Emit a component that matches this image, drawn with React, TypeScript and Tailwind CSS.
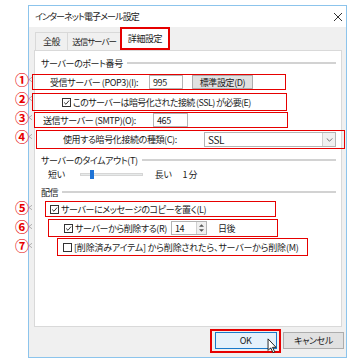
import React from 'react';

const Check: React.FC<{ checked?: boolean }> = ({ checked }) => (
    <span className="w-[9px] h-[9px] border border-[#333333] bg-white flex items-center justify-center shrink-0">
        {checked && (
            <svg viewBox="0 0 9 9" className="w-[9px] h-[9px]">
                <path d="M1.5 4.5 L3.8 6.8 L7.8 2" stroke="#222" strokeWidth="1.2" fill="none" />
            </svg>
        )}
    </span>
);

const Section: React.FC<{ label: string; className?: string }> = ({ label, className }) => (
    <div className={`flex items-center h-[14px] pl-[6px] pr-[5px] ${className ?? ''}`}>
        <span>{label}</span>
        <div className="flex-1 h-[2px] bg-[#d2d2d2] ml-[4px]" />
    </div>
);

const marks = [
    { n: '①', top: 'top-[72px]' },
    { n: '②', top: 'top-[91px]' },
    { n: '③', top: 'top-[110px]' },
    { n: '④', top: 'top-[129px]' },
    { n: '⑤', top: 'top-[200px]' },
    { n: '⑥', top: 'top-[219px]' },
    { n: '⑦', top: 'top-[238px]' },
];

const App: React.FC = () => {
    return (
        <div className="relative w-[351px] h-[359px] bg-white overflow-hidden text-[9px] leading-none tracking-[-0.4px] whitespace-nowrap text-[#1a1a1a] font-['Noto_Sans_CJK_JP',sans-serif] [font-feature-settings:'palt']">
            <div className="ml-[28px] mt-[5px] w-[319px] h-[353px] border border-[#8cc4ec] bg-[#f0f0f0] flex flex-col">
                {/* title bar */}
                <div className="h-[21px] bg-white flex items-center justify-between pl-[6px] pr-[3px]">
                    <span className="tracking-[-0.9px]">インターネット電子メール設定</span>
                    <svg viewBox="0 0 10 10" className="w-[10px] h-[10px]">
                        <path d="M1 1 L9 9 M9 1 L1 9" stroke="#333" strokeWidth="1" />
                    </svg>
                </div>

                {/* tabs */}
                <div className="flex items-end h-[23px] pl-[6px]">
                    <div className="h-[18px] w-[33px] border border-[#d9d9d9] border-b-0 flex items-center justify-center">全般</div>
                    <div className="h-[18px] w-[53px] border border-[#d9d9d9] border-b-0 border-l-0 flex items-center justify-center text-[8.5px] tracking-[-1px]">送信サーバー</div>
                    <div className="h-[23px] w-[50px] border-2 border-[#e60000] bg-white flex items-center justify-center -ml-px">詳細設定</div>
                </div>

                {/* panel */}
                <div className="ml-[5px] w-[308px] h-[277px] border border-[#d9d9d9] bg-white flex flex-col">
                    <Section label="サーバーのポート番号" className="mt-[5px]" />

                    <div className="-ml-[3px] mt-[4px] w-[254px] h-[16px] border border-[#e60000] flex items-center pl-[17px]">
                        <span className="w-[99px]">受信サーバー (POP3)(I):</span>
                        <div className="w-[34px] h-[14px] border border-[#b4b4b4] bg-white flex items-center pl-[3px]">995</div>
                        <div className="ml-[9px] w-[61px] h-[14px] border border-[#adadad] bg-[#e1e1e1] flex items-center justify-center">標準設定(D)</div>
                    </div>

                    <div className="-ml-[3px] mt-[3px] w-[255px] h-[18px] border border-[#e60000] flex items-center pl-[29px] gap-[2px]">
                        <Check checked />
                        <span className="tracking-[-0.6px]">このサーバーは暗号化された接続 (SSL) が必要(E)</span>
                    </div>

                    <div className="-ml-px mt-[1px] w-[254px] h-[16px] border border-[#e60000] flex items-center pl-[8px]">
                        <span className="w-[110px]">送信サーバー (SMTP)(O):</span>
                        <div className="w-[35px] h-[14px] border border-[#b4b4b4] bg-white flex items-center pl-[3px]">465</div>
                    </div>

                    <div className="ml-px mt-[2px] w-[309px] h-[19px] border border-[#e60000] flex items-center pl-[26px]">
                        <span className="w-[141px]">使用する暗号化接続の種類(C):</span>
                        <div className="w-[132px] h-[15px] border border-[#b4b4b4] bg-white flex items-center justify-between pl-[3px]">
                            <span className="text-[10px]">SSL</span>
                            <div className="w-[13px] h-[13px] border-l border-[#d0d0d0] bg-[#f0f0f0] flex items-center justify-center">
                                <svg viewBox="0 0 8 5" className="w-[7px] h-[4px]">
                                    <path d="M0.5 0.5 L4 4 L7.5 0.5" stroke="#555" strokeWidth="1" fill="none" />
                                </svg>
                            </div>
                        </div>
                    </div>

                    <Section label="サーバーのタイムアウト(T)" className="mt-[4px]" />

                    <div className="h-[12px] mt-[1px] flex items-center pl-[13px]">
                        <span>短い</span>
                        <div className="relative ml-[15px] w-[63px] h-[3px] bg-[#e7eaea] border border-[#d6d6d6]">
                            <div className="absolute left-[9px] -top-[4px] w-[4px] h-[9px] bg-[#1e73d6]" />
                        </div>
                        <span className="ml-[12px]">長い</span>
                        <span className="ml-[11px]">1 分</span>
                    </div>

                    <Section label="配信" className="mt-[5px]" />

                    <div className="ml-[10px] mt-[2px] w-[231px] h-[16px] border border-[#e60000] flex items-center pl-[4px] gap-[2px]">
                        <Check checked />
                        <span>サーバーにメッセージのコピーを置く(L)</span>
                    </div>

                    <div className="ml-[13px] mt-[2px] w-[230px] h-[18px] border border-[#e60000] flex items-center pl-[15px]">
                        <Check checked />
                        <span className="ml-[2px] w-[96px]">サーバーから削除する(R)</span>
                        <div className="w-[36px] h-[14px] border border-[#b4b4b4] bg-white flex items-center justify-between pl-[3px]">
                            <span>14</span>
                            <div className="w-[10px] h-[12px] bg-[#f0f0f0] border-l border-[#d0d0d0] flex flex-col items-center justify-center gap-[2px]">
                                <svg viewBox="0 0 6 3" className="w-[5px] h-[3px]"><path d="M0 3 L3 0 L6 3 Z" fill="#555" /></svg>
                                <svg viewBox="0 0 6 3" className="w-[5px] h-[3px]"><path d="M0 0 L3 3 L6 0 Z" fill="#555" /></svg>
                            </div>
                        </div>
                        <span className="ml-[11px]">日後</span>
                    </div>

                    <div className="ml-[22px] mt-[1px] w-[251px] h-[18px] border border-[#e60000] flex items-center pl-[5px] gap-[2px]">
                        <Check />
                        <span className="tracking-[-0.2px]">[削除済みアイテム] から削除されたら、サーバーから削除(M)</span>
                    </div>
                </div>

                {/* buttons */}
                <div className="flex items-center mt-[1px] pl-[181px] h-[25px]">
                    <div className="relative w-[71px] h-[24px] border-2 border-[#e60000] flex items-center justify-center">
                        <div className="w-[62px] h-[17px] border border-[#1979ca] bg-[#e5f1fb] flex items-center justify-center">OK</div>
                        <svg viewBox="0 0 12 18" className="absolute left-[55px] top-[7px] w-[11px] h-[16px]">
                            <path d="M1 1 L1 14 L4 11 L6.5 16.5 L8.5 15.5 L6 10.5 L10 10.5 Z" fill="#fff" stroke="#111" strokeWidth="1" strokeLinejoin="round" />
                        </svg>
                    </div>
                    <div className="ml-[2px] w-[61px] h-[17px] border border-[#adadad] bg-[#e1e1e1] flex items-center justify-center">キャンセル</div>
                </div>
            </div>

            {marks.map((m) => (
                <div key={m.n} className={`absolute left-[15px] ${m.top} flex items-center`}>
                    <span className="text-[14px] font-bold text-[#e60000] leading-none tracking-normal">{m.n}</span>
                    <svg viewBox="0 0 4 6" className="w-[3px] h-[5px]"><path d="M4 0 L0 3 L4 6" stroke="#999" strokeWidth="1" fill="none" /></svg>
                </div>
            ))}
        </div>
    );
};

export default App;
